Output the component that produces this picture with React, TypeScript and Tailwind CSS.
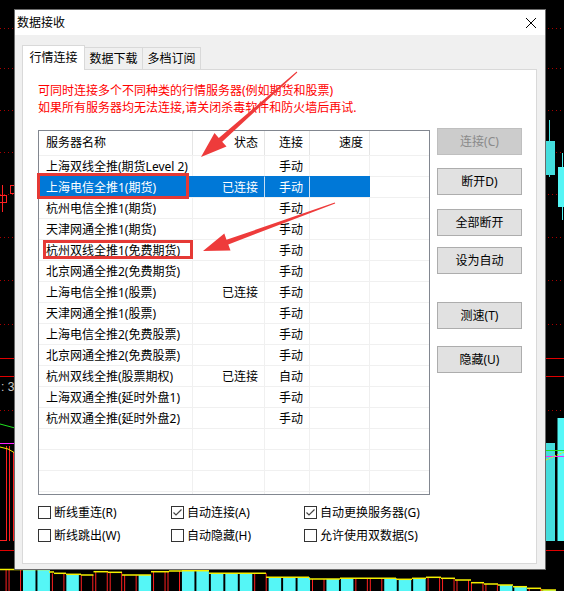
import React from "react";

const FONT = "font-['Noto_Sans','Noto_Sans_CJK_SC',sans-serif]";

const steps: [number, number, number][] = [
  [-20, 49, 569.5], [49, 54, 572], [54, 66, 573.3], [66, 81, 574.3], [81, 93.5, 575],
  [93.5, 108, 571.7], [108, 122, 572.3], [122, 151, 575], [151, 169, 571.7], [169, 182, 571],
  [182, 209, 570.7], [209, 266, 573.3], [266, 309, 577.3], [309, 340, 579], [340, 396, 578.3],
  [396, 412, 579.3], [412, 426, 578.3], [426, 441, 577.3], [441, 455, 578.3], [455, 471, 580],
  [471, 484, 582.7], [484, 498, 584], [498, 513, 585], [513, 527, 586.7], [527, 541, 588.3],
  [541, 556, 590], [556, 600, 592],
];
const yAt = (x: number) => {
  for (const [a, b, y] of steps) if (x >= a && x < b) return y;
  return 592;
};
const cyanSlots = new Set([0, 1, 3, 8, 11, 12, 13, 14, 15, 17, 18, 19, 21, 22, 25, 26, 27, 33, 34, 36]);

function Chart() {
  const slots: number[] = [];
  for (let i = -2; i <= 37; i++) slots.push(i);
  const dotted = [28, 68, 110, 152, 194, 237, 280, 324, 410];
  return (
    <svg className="absolute inset-0" width={564} height={591} viewBox="0 0 564 591">
      <rect x={0} y={0} width={564} height={591} fill="#000" />
      {dotted.map((y) => (
        <line key={y} x1={0} x2={564} y1={y + 0.5} y2={y + 0.5} stroke="#a80000" strokeWidth={1} strokeDasharray="1 3" />
      ))}
      <line x1={0} x2={564} y1={358.5} y2={358.5} stroke="#e00000" />
      <line x1={0} x2={564} y1={376.5} y2={376.5} stroke="#e00000" />
      <line x1={0} x2={564} y1={550.5} y2={550.5} stroke="#e00000" />
      <text x={1} y={391} fill="#c8c8c8" fontSize={12} fontFamily="Liberation Sans, sans-serif">: 33</text>
      {/* left candles */}
      <line x1={2.5} x2={2.5} y1={185} y2={212} stroke="#ff2020" />
      <rect x={-1.5} y={195.5} width={8} height={7} fill="none" stroke="#ff2020" />
      <rect x={10.5} y={185.5} width={10} height={8} fill="none" stroke="#ff2020" />
      {/* right candles */}
      <line x1={549.5} x2={549.5} y1={120} y2={177} stroke="#44dede" />
      <rect x={546} y={141} width={9} height={34} fill="#44dede" />
      <line x1={562.5} x2={562.5} y1={153} y2={220} stroke="#55f5f5" />
      <rect x={558} y={167} width={8} height={40} fill="#55f5f5" />
      {/* volume panel */}
      <line x1={6.5} x2={6.5} y1={446} y2={541} stroke="#ff2020" />
      <line x1={9.5} x2={9.5} y1={446} y2={541} stroke="#ff2020" />
      <line x1={13.5} x2={13.5} y1={452} y2={541} stroke="#ff2020" />
      <line x1={0} x2={7} y1={540.5} y2={540.5} stroke="#ff2020" />
      <rect x={546} y={443} width={9} height={98} fill="#45dcdc" />
      <rect x={557.5} y={418} width={8} height={123} fill="#55f8f8" />
      <polyline points="0,424 15,428" fill="none" stroke="#20e020" />
      <polyline points="0,443.5 15,443.5" fill="none" stroke="#ff20ff" />
      <polyline points="0,447 8,449 15,453" fill="none" stroke="#f0f000" />
      <polyline points="546,450.5 564,450.5" fill="none" stroke="#20e020" />
      <polyline points="546,456.5 564,456.5" fill="none" stroke="#ff20ff" />
      <polyline points="546,460 555,456 564,452" fill="none" stroke="#f0f000" strokeDasharray="2 1" />
      {/* bottom panel */}
      {slots.map((i) => {
        const x0 = 23 + 14.45 * i;
        const top = yAt(x0 + 6);
        if (cyanSlots.has(i)) {
          return <rect key={i} x={x0} y={top} width={12.5} height={600 - top} fill="#55f6f6" />;
        }
        return (
          <g key={i}>
            <line x1={x0 + 0.5} x2={x0 + 0.5} y1={top} y2={600} stroke="#ff2020" />
            <line x1={x0 + 12} x2={x0 + 12} y1={top} y2={600} stroke="#ff2020" />
          </g>
        );
      })}
      {steps.map(([a, b, y], k) => (
        <line key={k} x1={a} x2={b} y1={y} y2={y} stroke="#f5f000" strokeWidth={1.5} />
      ))}
    </svg>
  );
}

function Overlay() {
  return (
    <svg className="absolute inset-0 pointer-events-none" width={564} height={591} viewBox="0 0 564 591">
      <rect x={38.5} y={174.5} width={149} height={23} fill="none" stroke="#e53935" strokeWidth={3} />
      <rect x={44.5} y={241.5} width={147} height={16} fill="none" stroke="#e53935" strokeWidth={3} />
      <polygon
        points="297.3,72.4 222.2,141.7 226.5,146.5 201,157 214.5,133.1 218.8,137.9 296.7,71.6"
        fill="#ee3b3b"
      />
      <polygon
        points="335.2,203.5 228.3,244.4 230.5,250.6 203,251 224.3,233.6 226.5,239.8 334.8,202.5"
        fill="#ee3b3b"
      />
    </svg>
  );
}

type Row = [string, string, string];
const rows: Row[] = [
  ["上海双线全推(期货Level 2)", "", "手动"],
  ["上海电信全推1(期货)", "已连接", "手动"],
  ["杭州电信全推1(期货)", "", "手动"],
  ["天津网通全推1(期货)", "", "手动"],
  ["杭州双线全推1(免费期货)", "", "手动"],
  ["北京网通全推2(免费期货)", "", "手动"],
  ["上海电信全推1(股票)", "已连接", "手动"],
  ["天津网通全推1(股票)", "", "手动"],
  ["上海电信全推2(免费股票)", "", "手动"],
  ["北京网通全推2(免费股票)", "", "手动"],
  ["杭州双线全推(股票期权)", "已连接", "自动"],
  ["上海双通全推(延时外盘1)", "", "手动"],
  ["杭州双通全推(延时外盘2)", "", "手动"],
  ["", "", ""],
  ["", "", ""],
  ["", "", ""],
  ["", "", ""],
];

function TableRow({ r, sel }: { r: Row; sel: boolean }) {
  const cell = sel
    ? "bg-[#0078d7] text-white border-t border-t-[#0078d7]"
    : "text-black border-t border-t-[#f0f0f0]";
  return (
    <div className="flex h-[21px] shrink-0">
      <div className={`${cell} w-[154px] border-r ${sel ? "border-r-[#0078d7]" : "border-r-[#f0f0f0]"} flex items-center pl-[7px] pt-[1px] whitespace-nowrap`}>
        {r[0]}
      </div>
      <div className={`${cell} w-[72px] border-r ${sel ? "border-r-[#c8def2]" : "border-r-[#f0f0f0]"} flex items-center justify-end pr-[6px] pt-[1px]`}>
        {r[1]}
      </div>
      <div className={`${cell} w-[45px] border-r ${sel ? "border-r-[#c8def2]" : "border-r-[#f0f0f0]"} flex items-center justify-end pr-[6px] pt-[1px]`}>
        {r[2]}
      </div>
      <div className={`${cell} w-[60px] border-r ${sel ? "border-r-[#0078d7]" : "border-r-[#f0f0f0]"}`} />
      <div className="flex-1 border-t border-t-[#f0f0f0]" />
    </div>
  );
}

function Btn({ label, disabled, mt }: { label: string; disabled?: boolean; mt: string }) {
  return (
    <div
      className={`${mt} w-[85px] h-[27px] flex items-center justify-center border ${
        disabled ? "bg-[#cccccc] border-[#bfbfbf] text-[#8a8a8a]" : "bg-[#e1e1e1] border-[#adadad] text-black"
      }`}
    >
      {label}
    </div>
  );
}

function Check({ label, checked }: { label: string; checked?: boolean }) {
  return (
    <div className="flex items-center h-[23px]">
      <div className="w-[13px] h-[13px] border border-[#333333] bg-white flex items-center justify-center shrink-0">
        {checked && (
          <svg width={11} height={11} viewBox="0 0 11 11">
            <polyline points="1.5,5.5 4,8 9.5,2.5" fill="none" stroke="#444" strokeWidth={1.2} />
          </svg>
        )}
      </div>
      <span className="ml-[3px] whitespace-nowrap">{label}</span>
    </div>
  );
}

export default function App() {
  return (
    <div className={`relative w-[564px] h-[591px] overflow-hidden bg-black text-[12px] ${FONT}`}>
      <Chart />
      <div className="absolute left-[14px] top-[9px] w-[532px] h-[561px] border border-[#6b6b6b] flex flex-col bg-[#f0f0f0]">
        <div className="h-[25px] bg-white flex items-center justify-between pl-[2px] pr-[9px] shrink-0">
          <span className="text-black">数据接收</span>
          <svg width={10} height={10} viewBox="0 0 10 10">
            <line x1={0} y1={0} x2={10} y2={10} stroke="#000" strokeWidth={1} />
            <line x1={10} y1={0} x2={0} y2={10} stroke="#000" strokeWidth={1} />
          </svg>
        </div>
        <div className="flex-1 px-[7px] pt-[10px] flex flex-col">
          <div className="h-[24px] flex items-end">
            <div className="relative z-10 -mb-px h-[25px] w-[63px] bg-white border border-b-0 border-[#d9d9d9] flex items-center justify-center text-black">
              行情连接
            </div>
            <div className="h-[22px] w-[58px] border-t border-r border-[#d9d9d9] flex items-center justify-center text-black">
              数据下载
            </div>
            <div className="h-[22px] w-[58px] border-t border-r border-[#d9d9d9] flex items-center justify-center text-black">
              多档订阅
            </div>
          </div>
          <div className="h-[495px] w-[515px] bg-white border border-[#d9d9d9] pl-[15px] pt-[12px] flex flex-col">
            <div className="text-[#ff0000] leading-[17px] whitespace-nowrap">
              <div>可同时连接多个不同种类的行情服务器(例如期货和股票)</div>
              <div>如果所有服务器均无法连接,请关闭杀毒软件和防火墙后再试.</div>
            </div>
            <div className="mt-[12px] flex items-start">
              <div className="mt-[2px] w-[392px] h-[365px] border border-[#828790] bg-white flex flex-col overflow-hidden">
                <div className="h-[24px] flex shrink-0 text-black">
                  <div className="w-[154px] border-r border-[#e5e5e5] flex items-center pl-[7px]">服务器名称</div>
                  <div className="w-[72px] border-r border-[#e5e5e5] flex items-center justify-end pr-[6px]">状态</div>
                  <div className="w-[45px] border-r border-[#e5e5e5] flex items-center justify-end pr-[6px]">连接</div>
                  <div className="w-[60px] border-r border-[#e5e5e5] flex items-center justify-end pr-[6px]">速度</div>
                  <div className="flex-1" />
                </div>
                {rows.map((r, i) => (
                  <TableRow key={i} r={r} sel={i === 1} />
                ))}
              </div>
              <div className="ml-[7px] flex flex-col">
                <Btn label="连接(C)" disabled mt="mt-0" />
                <Btn label="断开D)" mt="mt-[13px]" />
                <Btn label="全部断开" mt="mt-[14px]" />
                <Btn label="设为自动" mt="mt-[11px]" />
                <Btn label="测速(T)" mt="mt-[28px]" />
                <Btn label="隐藏(U)" mt="mt-[17px]" />
              </div>
            </div>
            <div className="mt-[6px] grid grid-cols-[133px_133px_1fr] text-black">
              <Check label="断线重连(R)" />
              <Check label="自动连接(A)" checked />
              <Check label="自动更换服务器(G)" checked />
              <Check label="断线跳出(W)" />
              <Check label="自动隐藏(H)" />
              <Check label="允许使用双数据(S)" />
            </div>
          </div>
        </div>
      </div>
      <Overlay />
    </div>
  );
}
